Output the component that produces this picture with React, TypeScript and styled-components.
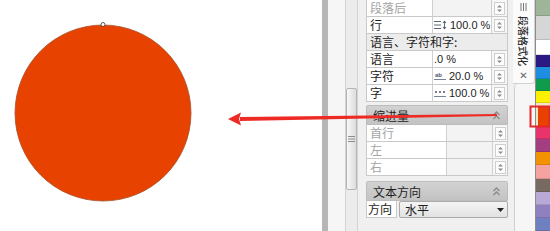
import React from 'react';
import styled, { createGlobalStyle } from 'styled-components';

const Global = createGlobalStyle`
  html, body { margin: 0; padding: 0; background: #fff; }
  body { font-family: "Noto Sans CJK SC", "Liberation Sans", sans-serif; }
`;

const Root = styled.div`
  position: relative;
  width: 550px;
  height: 231px;
  display: flex;
  overflow: hidden;
  background: #f0f0f0;
`;

const Canvas = styled.div`
  width: 322px;
  flex: none;
  background: #fff;
  padding: 20px 0 0 12px;
  box-sizing: border-box;
`;

const Splitter = styled.div`
  width: 6px;
  flex: none;
  background: #b6b6b6;
`;

const Gutter = styled.div`
  width: 17px;
  flex: none;
  background: #f6f6f6;
`;

const ScrollTrack = styled.div`
  width: 13px;
  flex: none;
  background: #ececec;
  border-left: 1px solid #d4d4d4;
  border-right: 1px solid #d4d4d4;
  box-sizing: border-box;
  padding-top: 88px;
`;

const Thumb = styled.div`
  height: 102px;
  background: linear-gradient(to right, #f8f8f8, #dcdcdc);
  border: 1px solid #b4b4b4;
  border-radius: 2px;
  display: flex;
  align-items: center;
  justify-content: center;
  box-sizing: border-box;
`;

const PanelWrap = styled.div`
  width: 155px;
  flex: none;
  padding: 0 5px 0 8px;
  box-sizing: border-box;
  display: flex;
  flex-direction: column;
`;

const Row = styled.div<{ $cols: string }>`
  display: grid;
  grid-template-columns: ${p => p.$cols};
  height: 17px;
  border: 1px solid #c9c9c9;
  border-top: none;
  background: #fff;
  box-sizing: border-box;
`;

const Label = styled.div<{ $off?: boolean }>`
  font-size: 12px;
  line-height: 16px;
  padding-left: 3px;
  color: ${p => (p.$off ? '#a4a4a4' : '#1e1e1e')};
  border-right: 1px solid #d0d0d0;
  white-space: nowrap;
  overflow: hidden;
`;

const Value = styled.div<{ $off?: boolean }>`
  display: flex;
  align-items: center;
  gap: 3px;
  font-family: "Liberation Sans", Arial, sans-serif;
  font-size: 11px;
  color: #222;
  background: ${p => (p.$off ? '#f3f3f3' : '#fff')};
  border-right: 1px solid #d0d0d0;
  padding-left: 1px;
`;

const SpinCell = styled.div`
  display: flex;
  align-items: center;
  justify-content: center;
  background: #f7f7f7;
`;

const SpinBox = styled.div`
  width: 11px;
  height: 13px;
  border: 1px solid #cfcfcf;
  background: #fdfdfd;
  box-sizing: border-box;
  display: flex;
  align-items: center;
  justify-content: center;
`;

const SubHead = styled.div`
  height: 17px;
  border: 1px solid #c9c9c9;
  border-top: none;
  background: #ececec;
  font-size: 12px;
  line-height: 16px;
  padding-left: 3px;
  color: #1e1e1e;
  box-sizing: border-box;
`;

const Section = styled.div<{ $gap: number }>`
  margin-top: ${p => p.$gap}px;
  height: 20px;
  background: linear-gradient(#d2d2d2, #c3c3c3);
  border: 1px solid #bcbcbc;
  border-radius: 2px 2px 0 0;
  display: flex;
  align-items: center;
  justify-content: space-between;
  padding: 0 6px 0 6px;
  font-size: 12px;
  color: #1e1e1e;
  box-sizing: border-box;
`;

const DirRow = styled.div`
  height: 17px;
  display: flex;
  gap: 2px;
`;

const DirLabel = styled.div`
  width: 31px;
  background: #fff;
  border: 1px solid #c9c9c9;
  border-top: none;
  font-size: 12px;
  line-height: 16px;
  padding-left: 1px;
  color: #1e1e1e;
  box-sizing: border-box;
`;

const Select = styled.div`
  flex: 1;
  background: linear-gradient(#f4f4f4, #e2e2e2);
  border: 1px solid #aaaaaa;
  border-radius: 2px;
  display: flex;
  align-items: center;
  justify-content: space-between;
  padding: 0 3px 0 5px;
  font-size: 12px;
  color: #1e1e1e;
  box-sizing: border-box;
`;

const TabCol = styled.div`
  width: 22px;
  flex: none;
  display: flex;
  flex-direction: column;
`;

const Tab = styled.div`
  height: 84px;
  background: #fbfbfb;
  border-right: 1px solid #d2d2d2;
  border-bottom: 1px solid #d2d2d2;
  border-radius: 0 0 4px 0;
  display: flex;
  flex-direction: column;
  align-items: center;
  padding-top: 3px;
  gap: 5px;
  box-sizing: border-box;
`;

const TabText = styled.span`
  writing-mode: vertical-rl;
  text-orientation: sideways;
  font-family: "Noto Sans CJK SC", "Liberation Serif", serif;
  font-size: 10px;
  line-height: 11px;
  color: #2c2c2c;
  font-weight: 500;
`;

const TabClose = styled.span`
  font-family: "DejaVu Sans", sans-serif;
  font-size: 10px;
  color: #666;
  line-height: 10px;
`;

const TabRest = styled.div`
  flex: 1;
  margin-left: 1px;
  border-left: 1px solid #cfcfcf;
  border-top-left-radius: 4px;
  background: #f6f6f6;
`;

const Palette = styled.div`
  width: 15px;
  flex: none;
  display: flex;
  flex-direction: column;
  border-left: 1px solid #8c8c8c;
`;

const Swatch = styled.div<{ $c: string; $h: number; $on?: boolean }>`
  height: ${p => p.$h}px;
  flex: none;
  background: ${p => p.$c};
  border-bottom: 1px solid rgba(0, 0, 0, 0.12);
  box-sizing: border-box;
  box-shadow: ${p => (p.$on ? 'inset 2px 3px 0 #f1e2c8' : 'none')};
`;

const Overlay = styled.svg`
  position: absolute;
  left: 0;
  top: 0;
  pointer-events: none;
`;

const Spin = () => (
  <SpinCell>
    <SpinBox>
      <svg width="7" height="9" viewBox="0 0 7 9">
        <path d="M1 3.5 L3.5 1 L6 3.5Z" fill="#8a8a8a" />
        <path d="M1 5.5 L3.5 8 L6 5.5Z" fill="#8a8a8a" />
      </svg>
    </SpinBox>
  </SpinCell>
);

const LineIcon = () => (
  <svg width="13" height="10" viewBox="0 0 13 10">
    <g stroke="#5a6478" strokeWidth="1">
      <path d="M0 1.5h7M0 5h7M0 8.5h7" />
      <path d="M10.5 1v8" />
    </g>
    <path d="M8.5 3 L10.5 0.5 L12.5 3Z M8.5 7 L10.5 9.5 L12.5 7Z" fill="#5a6478" />
  </svg>
);

const CharIcon = () => (
  <svg width="12" height="10" viewBox="0 0 12 10">
    <text x="1" y="6" fontSize="6" fontFamily="Liberation Sans" fontWeight="bold" fill="#4a5468">ab</text>
    <path d="M0 8.5h12" stroke="#7a8498" strokeWidth="1" />
  </svg>
);

const WordIcon = () => (
  <svg width="12" height="10" viewBox="0 0 12 10">
    <path d="M1 4h2M5 4h2M9 4h2" stroke="#4a5468" strokeWidth="1.4" />
    <path d="M0 8.5h12" stroke="#7a8498" strokeWidth="1" />
  </svg>
);

const Chevrons = () => (
  <svg width="9" height="9" viewBox="0 0 9 9">
    <path d="M1.5 4 L4.5 1 L7.5 4 M1.5 8 L4.5 5 L7.5 8" stroke="#8a8a8a" strokeWidth="1.3" fill="none" />
  </svg>
);

const palette: [string, number, boolean?][] = [
  ['#9fb59a', 16],
  ['#d6d6d6', 24],
  ['#ffffff', 15],
  ['#2c1a84', 12],
  ['#1e8ee0', 12],
  ['#0f9a4c', 12],
  ['#fff000', 12],
  ['#e84100', 24, true],
  ['#e8336c', 12],
  ['#a33f80', 13],
  ['#f39200', 13],
  ['#f5a3a0', 14],
  ['#776a60', 13],
  ['#b9a9d6', 13],
  ['#8f80bf', 13],
  ['#6f80c0', 13],
];

const MAIN = '66px 59px 1fr';
const INDENT = '80px 46px 1fr';

export default function App() {
  return (
    <Root>
      <Global />
      <Canvas>
        <svg width="184" height="186" viewBox="0 0 184 186">
          <circle cx="91" cy="93" r="88" fill="#e84200" stroke="#a4502c" strokeWidth="0.8" />
          <circle cx="91" cy="4.5" r="2" fill="#fff" stroke="#333" strokeWidth="0.8" />
        </svg>
      </Canvas>
      <Splitter />
      <Gutter />
      <ScrollTrack>
        <Thumb>
          <svg width="7" height="6" viewBox="0 0 7 6">
            <path d="M0 0.5h7M0 3h7M0 5.5h7" stroke="#8c8c8c" strokeWidth="1" />
          </svg>
        </Thumb>
      </ScrollTrack>
      <PanelWrap>
        <Row $cols={MAIN}>
          <Label $off>段落后</Label>
          <Value $off />
          <Spin />
        </Row>
        <Row $cols={MAIN}>
          <Label>行</Label>
          <Value><LineIcon />100.0 %</Value>
          <Spin />
        </Row>
        <SubHead>语言、字符和字:</SubHead>
        <Row $cols={MAIN}>
          <Label>语言</Label>
          <Value>.0 %</Value>
          <Spin />
        </Row>
        <Row $cols={MAIN}>
          <Label>字符</Label>
          <Value><CharIcon />20.0 %</Value>
          <Spin />
        </Row>
        <Row $cols={MAIN}>
          <Label>字</Label>
          <Value><WordIcon />100.0 %</Value>
          <Spin />
        </Row>
        <Section $gap={3}>
          <span>缩进量</span>
          <Chevrons />
        </Section>
        <Row $cols={INDENT}>
          <Label $off>首行</Label>
          <Value $off />
          <Spin />
        </Row>
        <Row $cols={INDENT}>
          <Label $off>左</Label>
          <Value $off />
          <Spin />
        </Row>
        <Row $cols={INDENT}>
          <Label $off>右</Label>
          <Value $off />
          <Spin />
        </Row>
        <Section $gap={5}>
          <span>文本方向</span>
          <Chevrons />
        </Section>
        <DirRow>
          <DirLabel>方向</DirLabel>
          <Select>
            <span>水平</span>
            <svg width="7" height="4" viewBox="0 0 7 4">
              <path d="M0 0h7L3.5 4Z" fill="#222" />
            </svg>
          </Select>
        </DirRow>
      </PanelWrap>
      <TabCol>
        <Tab>
          <svg width="7" height="8" viewBox="0 0 7 8">
            <path d="M1 0v8M3.5 0v8M6 0v8" stroke="#777" strokeWidth="1" />
          </svg>
          <TabText>段落格式化</TabText>
          <TabClose>✕</TabClose>
        </Tab>
        <TabRest />
      </TabCol>
      <Palette>
        {palette.map(([c, h, on], i) => (
          <Swatch key={i} $c={c} $h={h} $on={on} />
        ))}
      </Palette>
      <Overlay width="550" height="231" viewBox="0 0 550 231">
        <path d="M240 117 L497 114 L497 116 L240 121Z" fill="#ee2a24" />
        <path d="M228 119 L241 112.5 L239 119 L241 125.5Z" fill="#ee2a24" />
        <rect x="530.5" y="106.5" width="19" height="20" fill="none" stroke="#e3262a" strokeWidth="2" />
      </Overlay>
    </Root>
  );
}
